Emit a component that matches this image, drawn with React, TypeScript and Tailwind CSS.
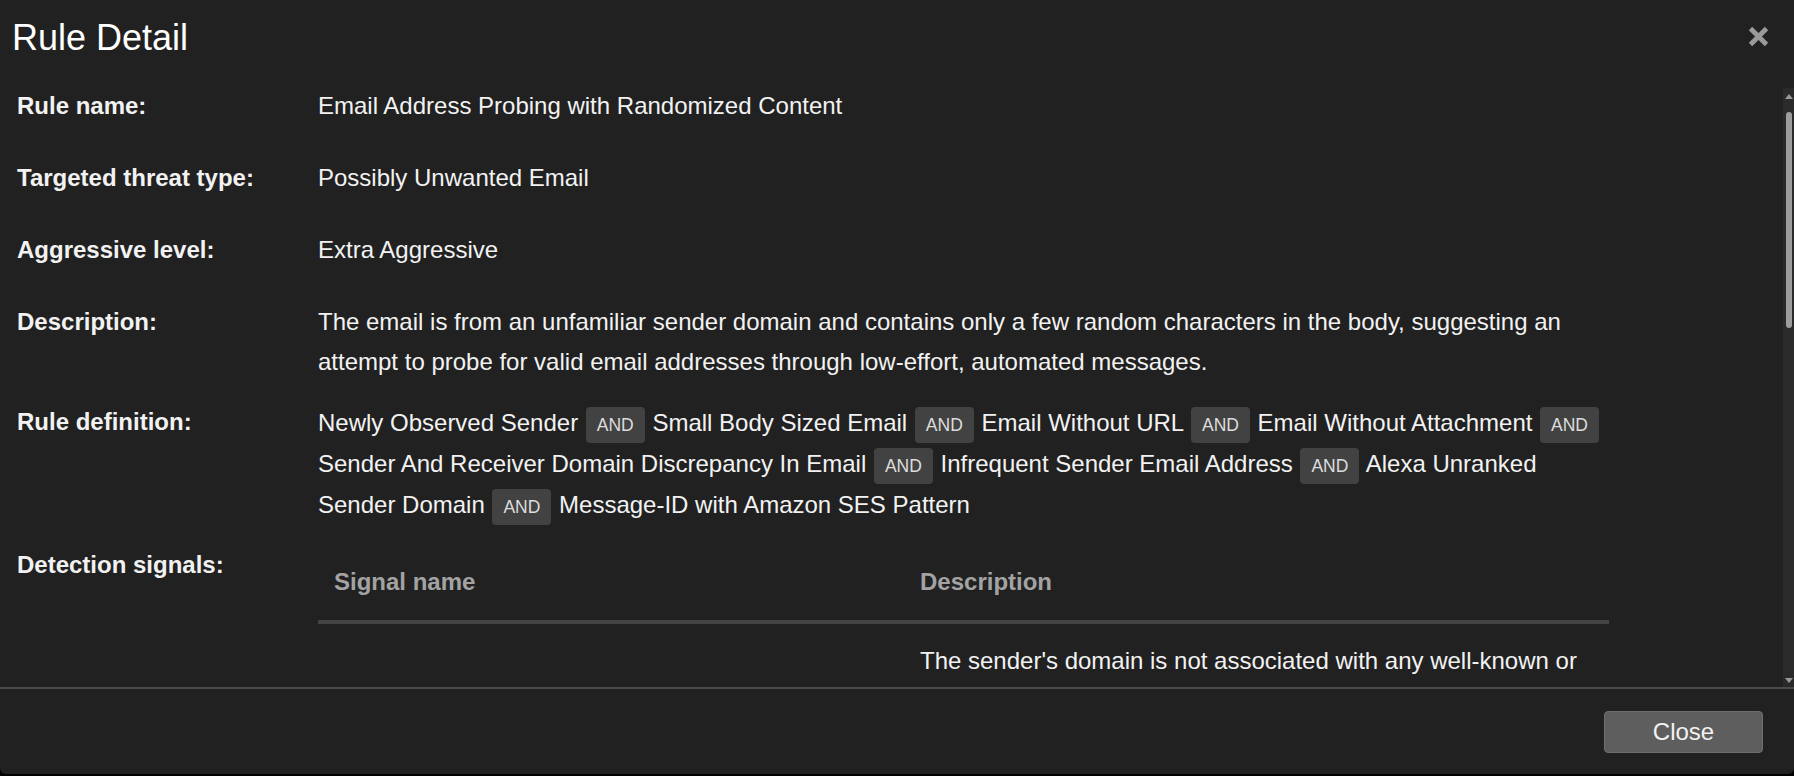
import React from "react";

function AndBadge() {
  return (
    <span className="inline-block align-baseline bg-[#424242] text-[#dcdcdc] text-[17.5px] leading-[36px] px-[11px] rounded-[4px] mx-[1px]">
      AND
    </span>
  );
}

function Row({
  label,
  children,
  lh = "leading-[40px]",
}: {
  label: string;
  children: React.ReactNode;
  lh?: string;
}) {
  return (
    <div className="flex items-start min-h-[52px] mb-[20px]">
      <div className="w-[318px] shrink-0 pl-[17px] font-bold leading-[40px]">{label}</div>
      <div className={"w-[1291px] shrink-0 " + lh}>{children}</div>
    </div>
  );
}

export default function App() {
  return (
    <div className="w-[1794px] h-[776px] bg-black font-['Liberation_Sans',Arial,sans-serif] text-[24px]">
      <div className="flex flex-col w-full h-[774px] bg-[#212121] rounded-b-[6px] text-[#f2f2f2] overflow-hidden">
        {/* header */}
        <div className="flex justify-between items-start h-[86px] shrink-0 pl-3 pr-[24px] pt-[17px]">
          <h2 className="text-[36px] leading-[42px] text-white">Rule Detail</h2>
          <button className="mt-[8px] w-[23px] h-[23px] text-[#9a9a9a]">
            <svg viewBox="0 0 23 23" width="23" height="23">
              <path d="M3.5 3.5 L19.5 19.5 M19.5 3.5 L3.5 19.5" stroke="currentColor" strokeWidth="4.8" />
            </svg>
          </button>
        </div>

        {/* body */}
        <div className="flex flex-1 min-h-0">
          <div className="flex-1 overflow-hidden">
            <Row label="Rule name:">Email Address Probing with Randomized Content</Row>
            <Row label="Targeted threat type:">Possibly Unwanted Email</Row>
            <Row label="Aggressive level:">Extra Aggressive</Row>
            <Row label="Description:">
              The email is from an unfamiliar sender domain and contains only a few random characters in the body,
              suggesting an attempt to probe for valid email addresses through low-effort, automated messages.
            </Row>
            <Row label="Rule definition:" lh="leading-[41px]">
              Newly Observed Sender <AndBadge /> Small Body Sized Email <AndBadge /> Email Without URL <AndBadge />{" "}
              Email Without Attachment <AndBadge /> Sender And Receiver Domain Discrepancy In Email <AndBadge />{" "}
              Infrequent Sender Email Address <AndBadge /> Alexa Unranked Sender Domain <AndBadge /> Message-ID with
              Amazon SES Pattern
            </Row>
            <div className="flex items-start">
              <div className="w-[318px] shrink-0 pl-[17px] font-bold leading-[40px]">Detection signals:</div>
              <div className="w-[1291px] shrink-0">
                <div className="grid grid-cols-[585px_706px] border-b-4 border-[#444444] text-[#a3a3a3] font-bold">
                  <div className="pl-[16px] pt-[17px] pb-[18px] leading-[40px]">Signal name</div>
                  <div className="pl-[17px] pt-[17px] pb-[18px] leading-[40px]">Description</div>
                </div>
                <div className="grid grid-cols-[585px_706px]">
                  <div className="pl-[16px] pt-[17px]"></div>
                  <div className="pl-[17px] pr-[16px] pt-[17px] leading-[40px]">
                    The sender's domain is not associated with any well-known or reputable organization, which may
                    indicate a newly registered or suspicious domain.
                  </div>
                </div>
              </div>
            </div>
          </div>

          {/* scrollbar */}
          <div className="w-[11px] shrink-0 mt-[2px] bg-[#2a2a2a] flex flex-col items-center">
            <div className="mt-[6px] w-0 h-0 border-l-[4px] border-r-[4px] border-b-[5px] border-l-transparent border-r-transparent border-b-[#9a9a9a]"></div>
            <div className="mt-[13px] w-[6px] h-[216px] rounded-full bg-[#9d9d9d]"></div>
            <div className="flex-1"></div>
            <div className="mb-[4px] w-0 h-0 border-l-[4px] border-r-[4px] border-t-[5px] border-l-transparent border-r-transparent border-t-[#9a9a9a]"></div>
          </div>
        </div>

        {/* footer */}
        <div className="flex justify-end h-[87px] shrink-0 border-t-2 border-[#4a4a4a] pt-[22px] pr-[31px]">
          <button className="w-[159px] h-[42px] bg-[#5e5e5e] border border-[#6e6e6e] rounded-[4px] text-[#f2f2f2] text-[24px] leading-none">
            Close
          </button>
        </div>
      </div>
    </div>
  );
}
